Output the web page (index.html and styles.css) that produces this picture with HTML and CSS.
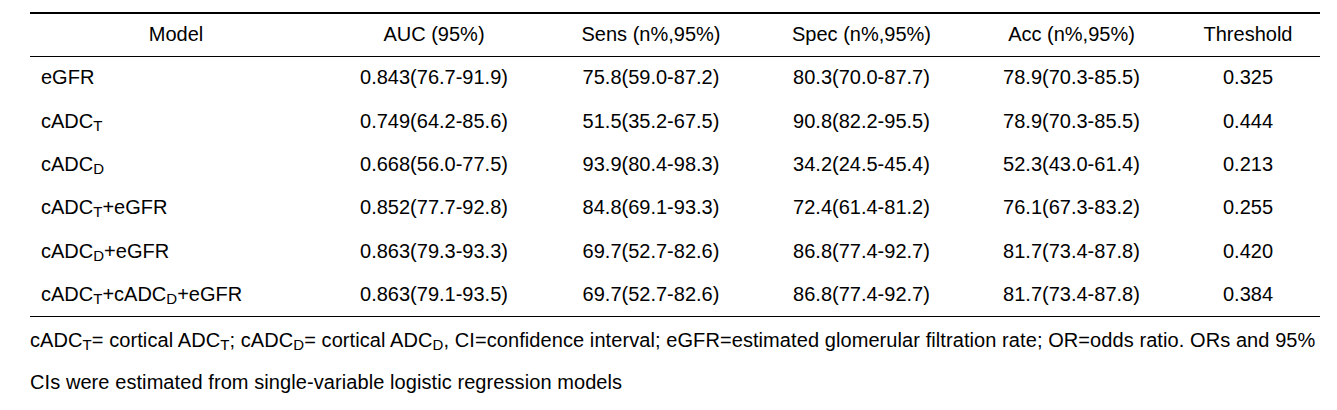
FILE: index.html
```html
<!DOCTYPE html>
<html lang="en">
<head>
<meta charset="utf-8">
<title>Model performance</title>
<link rel="stylesheet" href="styles.css">
</head>
<body>
<div class="page">
  <table class="results">
    <colgroup>
      <col class="c-model">
      <col class="c-auc">
      <col class="c-sens">
      <col class="c-spec">
      <col class="c-acc">
      <col class="c-thr">
    </colgroup>
    <thead>
      <tr>
        <th class="model">Model</th>
        <th>AUC (95%)</th>
        <th>Sens (n%,95%)</th>
        <th>Spec (n%,95%)</th>
        <th>Acc (n%,95%)</th>
        <th>Threshold</th>
      </tr>
    </thead>
    <tbody>
      <tr class="r43">
        <td class="name">eGFR</td>
        <td>0.843(76.7-91.9)</td>
        <td>75.8(59.0-87.2)</td>
        <td>80.3(70.0-87.7)</td>
        <td>78.9(70.3-85.5)</td>
        <td>0.325</td>
      </tr>
      <tr class="r44">
        <td class="name">cADC<sub>T</sub></td>
        <td>0.749(64.2-85.6)</td>
        <td>51.5(35.2-67.5)</td>
        <td>90.8(82.2-95.5)</td>
        <td>78.9(70.3-85.5)</td>
        <td>0.444</td>
      </tr>
      <tr class="r43">
        <td class="name">cADC<sub>D</sub></td>
        <td>0.668(56.0-77.5)</td>
        <td>93.9(80.4-98.3)</td>
        <td>34.2(24.5-45.4)</td>
        <td>52.3(43.0-61.4)</td>
        <td>0.213</td>
      </tr>
      <tr class="r43">
        <td class="name">cADC<sub>T</sub>+eGFR</td>
        <td>0.852(77.7-92.8)</td>
        <td>84.8(69.1-93.3)</td>
        <td>72.4(61.4-81.2)</td>
        <td>76.1(67.3-83.2)</td>
        <td>0.255</td>
      </tr>
      <tr class="r44">
        <td class="name">cADC<sub>D</sub>+eGFR</td>
        <td>0.863(79.3-93.3)</td>
        <td>69.7(52.7-82.6)</td>
        <td>86.8(77.4-92.7)</td>
        <td>81.7(73.4-87.8)</td>
        <td>0.420</td>
      </tr>
      <tr class="r43">
        <td class="name">cADC<sub>T</sub>+cADC<sub>D</sub>+eGFR</td>
        <td>0.863(79.1-93.5)</td>
        <td>69.7(52.7-82.6)</td>
        <td>86.8(77.4-92.7)</td>
        <td>81.7(73.4-87.8)</td>
        <td>0.384</td>
      </tr>
    </tbody>
  </table>
  <p class="note">cADC<sub>T</sub>= cortical ADC<sub>T</sub>; cADC<sub>D</sub>= cortical ADC<sub>D</sub>, CI=confidence interval; eGFR=estimated glomerular filtration rate; OR=odds ratio. ORs and 95% CIs were estimated from single-variable logistic regression models</p>
</div>
</body>
</html>
```

FILE: styles.css
```css
html, body {
  margin: 0;
  padding: 0;
  background: #ffffff;
}

body {
  font-family: "Liberation Sans", Arial, sans-serif;
  color: #000000;
}

.page {
  padding: 12px 0 0 30px;
  width: 1290px;
}

.results {
  border-collapse: collapse;
  width: 1290px;
  table-layout: fixed;
  font-size: 20px;
  border-top: 2px solid #000;
  border-bottom: 1px solid #000;
}

.c-model { width: 292px; }
.c-auc { width: 224px; }
.c-sens { width: 210px; }
.c-spec { width: 211px; }
.c-acc { width: 209px; }
.c-thr { width: 144px; }

.results th,
.results td {
  padding: 0;
  text-align: center;
  vertical-align: middle;
  font-weight: normal;
  line-height: 23px;
  white-space: nowrap;
}

.results thead tr {
  height: 43px;
}

.results thead th {
  border-bottom: 1px solid #000;
}

.results tr.r43 { height: 43px; }
.results tr.r44 { height: 44px; }

.results td.name {
  text-align: left;
  padding-left: 11px;
}

sub {
  font-size: 15px;
  vertical-align: -3px;
  line-height: 0;
}

.note {
  margin: 2px 0 0 0;
  font-size: 20px;
  letter-spacing: 0.08px;
  line-height: 42px;
  width: 1292px;
}
```
